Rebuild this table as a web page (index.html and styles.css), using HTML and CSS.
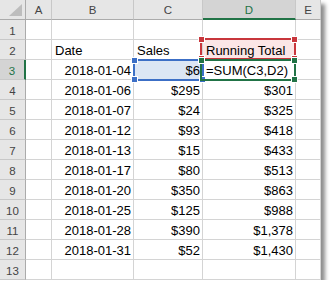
FILE: index.html
```html
<!DOCTYPE html>
<html>
<head>
<meta charset="utf-8">
<link rel="stylesheet" href="styles.css">
</head>
<body>
<div class="sheet">
  <div class="hd corner"><span class="tri"></span></div>
  <div class="hd col">A</div>
  <div class="hd col">B</div>
  <div class="hd col">C</div>
  <div class="hd col sel">D</div>
  <div class="hd col">E</div>

  <div class="hd row">1</div><div class="c"></div><div class="c"></div><div class="c"></div><div class="c"></div><div class="c"></div>
  <div class="hd row">2</div><div class="c"></div><div class="c">Date</div><div class="c">Sales</div><div class="c pink">Running Total</div><div class="c"></div>
  <div class="hd row sel">3</div><div class="c"></div><div class="c r">2018-01-04</div><div class="c r blue">$6</div><div class="c">=SUM(C3,D2)</div><div class="c"></div>
  <div class="hd row">4</div><div class="c"></div><div class="c r">2018-01-06</div><div class="c r">$295</div><div class="c r">$301</div><div class="c"></div>
  <div class="hd row">5</div><div class="c"></div><div class="c r">2018-01-07</div><div class="c r">$24</div><div class="c r">$325</div><div class="c"></div>
  <div class="hd row">6</div><div class="c"></div><div class="c r">2018-01-12</div><div class="c r">$93</div><div class="c r">$418</div><div class="c"></div>
  <div class="hd row">7</div><div class="c"></div><div class="c r">2018-01-13</div><div class="c r">$15</div><div class="c r">$433</div><div class="c"></div>
  <div class="hd row">8</div><div class="c"></div><div class="c r">2018-01-17</div><div class="c r">$80</div><div class="c r">$513</div><div class="c"></div>
  <div class="hd row">9</div><div class="c"></div><div class="c r">2018-01-20</div><div class="c r">$350</div><div class="c r">$863</div><div class="c"></div>
  <div class="hd row">10</div><div class="c"></div><div class="c r">2018-01-25</div><div class="c r">$125</div><div class="c r">$988</div><div class="c"></div>
  <div class="hd row">11</div><div class="c"></div><div class="c r">2018-01-28</div><div class="c r">$390</div><div class="c r">$1,378</div><div class="c"></div>
  <div class="hd row">12</div><div class="c"></div><div class="c r">2018-01-31</div><div class="c r">$52</div><div class="c r">$1,430</div><div class="c"></div>
  <div class="hd row">13</div><div class="c"></div><div class="c"></div><div class="c"></div><div class="c"></div><div class="c"></div>

  <div class="box box-blue"><i class="h tl"></i><i class="h tr"></i><i class="h bl"></i><i class="h br"></i></div>
  <div class="box box-red"><i class="h tl"></i><i class="h tr"></i><i class="h bl"></i><i class="h br"></i></div>
  <div class="box box-green"><i class="h tl"></i><i class="h tr"></i><i class="h br"></i></div>
</div>
</body>
</html>
```
FILE: styles.css
```css
html, body {
  margin: 0;
  padding: 0;
  background: #ffffff;
}

.sheet {
  position: relative;
  display: grid;
  grid-template-columns: 26px 26px 82px 69px 93px 25px;
  grid-template-rows: repeat(14, 20px);
  width: 321px;
  font-family: "Liberation Sans", Arial, sans-serif;
  font-size: 13px;
  color: #000;
  box-shadow: 4px 4px 4px rgba(0, 0, 0, 0.45);
  background: #fff;
}

.sheet > div {
  box-sizing: border-box;
}

.c {
  border-right: 1px solid #d4d4d4;
  border-bottom: 1px solid #d4d4d4;
  padding: 0 2px 0 3px;
  display: flex;
  align-items: flex-end;
  line-height: 16px;
  white-space: nowrap;
  overflow: visible;
}

.c.r {
  justify-content: flex-end;
}

.c.blue {
  background: #dce6f4;
}

.c.pink {
  background: #fbe6e6;
}

.hd {
  background: #e6e6e6;
  color: #444;
  font-size: 11.5px;
  display: flex;
  align-items: center;
  justify-content: center;
  border-right: 1px solid #c8c8c8;
  border-bottom: 1px solid #c8c8c8;
}

.hd.col {
  border-bottom: 1px solid #ababab;
  padding-top: 1px;
}

.hd.row {
  border-right: 1px solid #ababab;
  padding-top: 2px;
}

.hd.corner {
  border-right: 1px solid #ababab;
  border-bottom: 1px solid #ababab;
  position: relative;
}

.tri {
  position: absolute;
  right: 3px;
  bottom: 3px;
  width: 13px;
  height: 12px;
  background: #bdbdbd;
  clip-path: polygon(100% 0, 100% 100%, 0 100%);
}

.hd.col.sel {
  background: #d4d4d4;
  color: #217346;
  border-bottom: 2px solid #217346;
}

.hd.row.sel {
  background: #d4d4d4;
  color: #217346;
  border-right: 2px solid #217346;
}

.box {
  position: absolute;
  box-sizing: border-box;
  border: 2px solid;
  pointer-events: none;
}

.box-blue {
  left: 133px;
  top: 59px;
  width: 71px;
  height: 22px;
  border-color: #3c6fc6;
  color: #3c6fc6;
}

.box-red {
  left: 200px;
  top: 38px;
  width: 96px;
  height: 22px;
  border-color: #c8363c;
  color: #c8363c;
}

.box-green {
  left: 200px;
  top: 59px;
  width: 96px;
  height: 22px;
  border-color: #217346;
  color: #217346;
}

.h {
  position: absolute;
  width: 5px;
  height: 5px;
  background: currentColor;
  border: 1px solid #fff;
  box-sizing: content-box;
}

.h.tl { left: -4px; top: -4px; }
.h.tr { right: -4px; top: -4px; }
.h.bl { left: -4px; bottom: -4px; }
.h.br { right: -4px; bottom: -4px; }
```
